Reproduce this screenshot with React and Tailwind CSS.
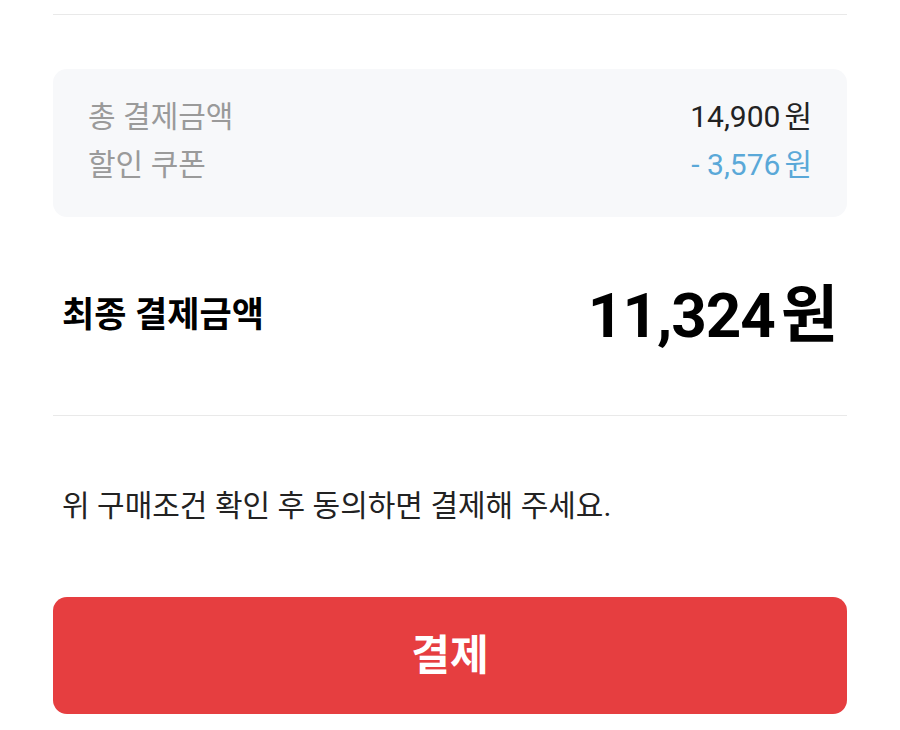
export default function App() {
  const kr = { fontFamily: "Roboto, 'Noto Sans CJK KR', 'Noto Sans', sans-serif" };
  return (
    <div className="w-[900px] h-[730px] bg-white overflow-hidden" style={kr}>
      <div className="mx-[53px]">
        <div className="h-[14px]" />
        <div className="h-px bg-[#e9e9e9]" />
        <div className="h-[54px]" />
        <div className="rounded-[14px] bg-[#f7f8fa] pl-[35px] pr-[35px] pt-[24px] pb-[28px] text-[30px] leading-[48px]">
          <div className="flex justify-between">
            <span className="text-[#9a9a9a]">총 결제금액</span>
            <span className="text-[#222]">14,900<span className="ml-[4px]">원</span></span>
          </div>
          <div className="flex justify-between">
            <span className="text-[#9a9a9a]">할인 쿠폰</span>
            <span className="text-[#5aa8d8]">- 3,576<span className="ml-[4px]">원</span></span>
          </div>
        </div>
        <div className="flex items-center justify-between pl-[9px] pr-[10px] h-[198px]">
          <span className="text-[35px] font-bold text-black">최종 결제금액</span>
          <span className="text-[62px] font-bold text-black tracking-[-1px] leading-none">11,324<span className="ml-[6px]">원</span></span>
        </div>
        <div className="h-px bg-[#e9e9e9]" />
        <div className="pl-[9px] pt-[70px] text-[30px] leading-[40px] text-[#222]">위 구매조건 확인 후 동의하면 결제해 주세요.</div>
        <div className="h-[71px]" />
        <button className="w-full h-[117px] rounded-[14px] bg-[#e63e40] text-white text-[42px] font-bold">결제</button>
      </div>
    </div>
  );
}
